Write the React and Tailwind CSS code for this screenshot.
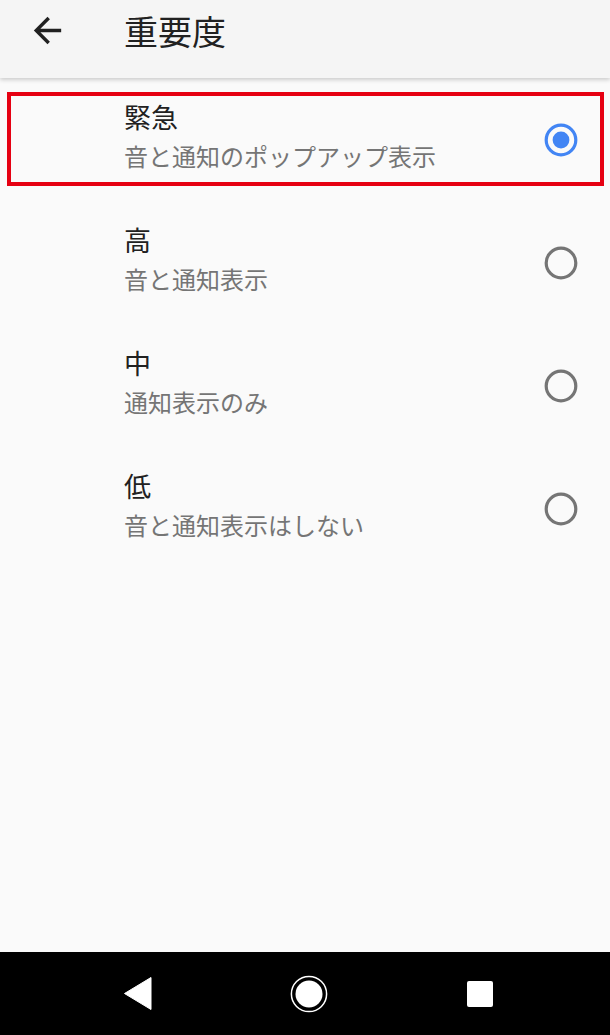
import React from "react";

const items = [
  { title: "緊急", sub: "音と通知のポップアップ表示", selected: true },
  { title: "高", sub: "音と通知表示" },
  { title: "中", sub: "通知表示のみ" },
  { title: "低", sub: "音と通知表示はしない" },
];

const font = { fontFamily: '"Noto Sans CJK JP", "Noto Sans", Roboto, sans-serif' };

function Radio({ on }) {
  return (
    <svg width="34" height="34" viewBox="0 0 34 34">
      <circle
        cx="17"
        cy="17"
        r="14.8"
        fill="none"
        stroke={on ? "#4285f4" : "#757575"}
        strokeWidth="3.2"
      />
      {on && <circle cx="17" cy="17" r="8.4" fill="#4285f4" />}
    </svg>
  );
}

const App = () => {
  return (
    <div className="w-[610px] h-[1035px] flex flex-col bg-[#fafafa]" style={font}>
      {/* toolbar */}
      <div className="relative z-10 h-[78px] shrink-0 bg-[#f5f5f5] shadow-[0_2px_4px_rgba(0,0,0,0.18)]">
        <div className="h-[61px] flex items-center pl-[27px]">
          <svg width="41" height="41" viewBox="0 0 24 24" fill="#212121">
            <path d="M20 11H7.83l5.59-5.59L12 4l-8 8 8 8 1.41-1.41L7.83 13H20v-2z" />
          </svg>
          <div className="ml-[56px] text-[34px] leading-[40px] text-[#212121]">重要度</div>
        </div>
      </div>

      {/* list */}
      <div className="flex-1">
        {items.map((it) => (
          <div key={it.title} className="relative h-[123px] flex items-center pl-[124px] pr-[32px]">
            <div className="flex-1 self-start pt-[21px]">
              <div className="text-[27px] leading-[36px] text-[#212121]">{it.title}</div>
              <div className="mt-[3px] text-[24px] leading-[36px] text-[#757575]">{it.sub}</div>
            </div>
            <Radio on={it.selected} />
            {it.selected && (
              <div className="absolute left-[7px] right-[6px] top-[14px] bottom-[15px] border-[4px] border-[#e60012] pointer-events-none" />
            )}
          </div>
        ))}
      </div>

      {/* nav bar */}
      <div className="h-[83px] shrink-0 bg-black flex items-center justify-center pl-[7px]">
        <div className="w-[171px] flex justify-center">
          <svg width="28" height="33" viewBox="0 0 28 33">
            <path d="M27 0.5 L27 32.5 L0.5 16.5 Z" fill="#fff" strokeLinejoin="round" stroke="#fff" strokeWidth="1" />
          </svg>
        </div>
        <div className="w-[171px] flex justify-center">
          <svg width="38" height="38" viewBox="0 0 38 38">
            <circle cx="19" cy="19" r="17.6" fill="none" stroke="#fff" strokeWidth="1.5" />
            <circle cx="19" cy="19" r="13.5" fill="#fff" />
          </svg>
        </div>
        <div className="w-[171px] flex justify-center">
          <div className="w-[26px] h-[26px] rounded-[2px] bg-white" />
        </div>
      </div>
    </div>
  );
};

export default App;
